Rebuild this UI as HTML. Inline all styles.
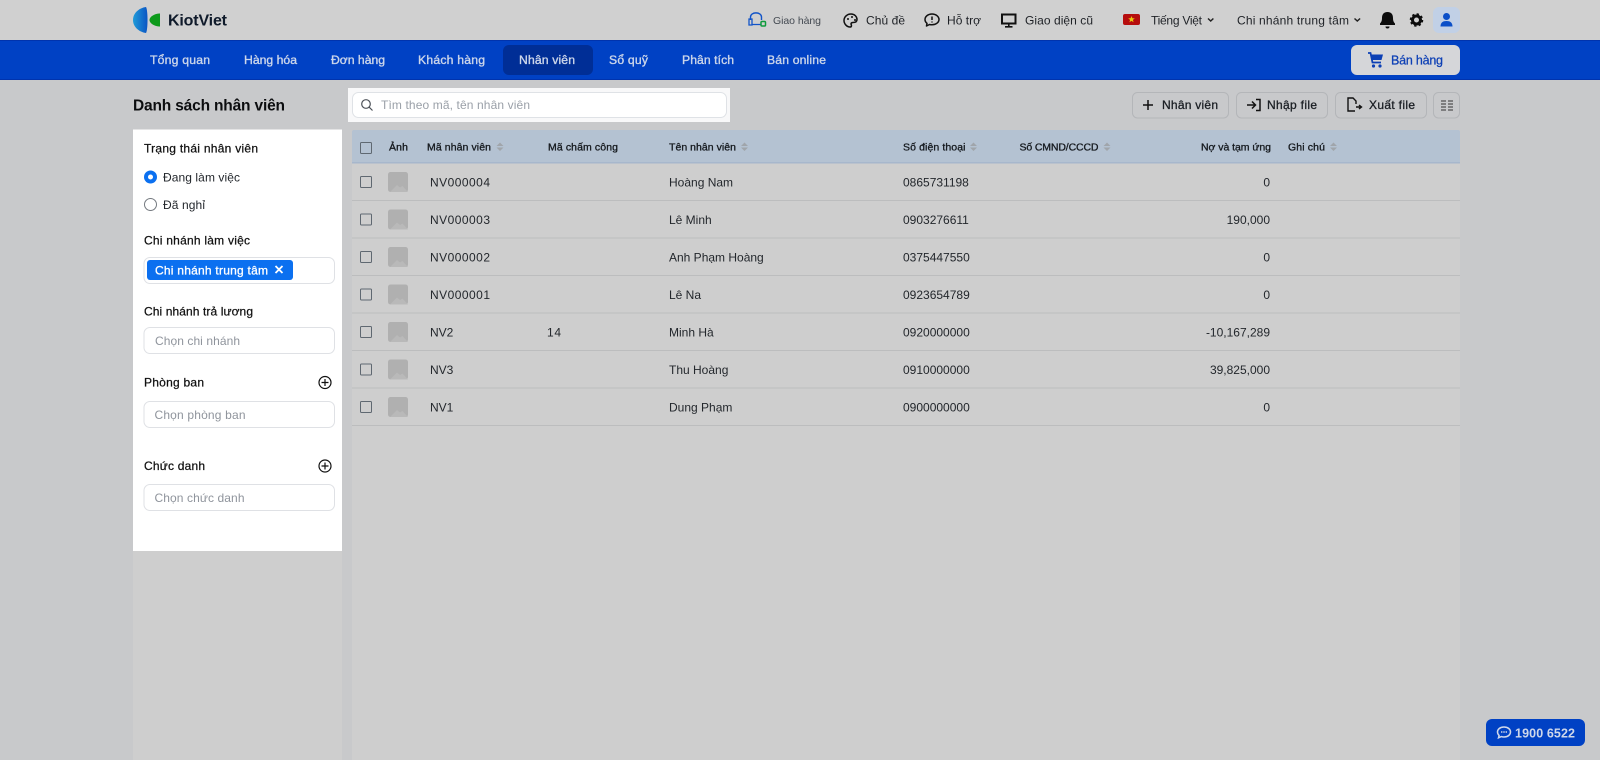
<!DOCTYPE html>
<html lang="vi"><head><meta charset="utf-8"><title>Danh sách nhân viên</title>
<style>
html,body{margin:0;padding:0;width:1600px;height:760px;overflow:hidden;background:#c8c9cb}
svg{display:block}
text{font-family:"Liberation Sans",sans-serif;font-size:12px;fill:#1c1f24}
.n text{font-size:12.2px;fill:#ccd6ea;stroke:#ccd6ea;stroke-width:.35}
.h text{font-size:10.5px;fill:#14181d;stroke:#14181d;stroke-width:.3}
.r text{font-size:12px;fill:#23272c}
.l text{font-size:12px;fill:#111;stroke:#111;stroke-width:.25}
.p text{font-size:12px;fill:#8f949c}
.t text{font-size:12px;fill:#23272c}
.b text{font-size:12px;fill:#1b1f24;stroke:#1b1f24;stroke-width:.3}
.top text{font-size:12px;fill:#1e2126}
.ic{fill:none;stroke:#111;stroke-width:1.5;stroke-linecap:round;stroke-linejoin:round}
</style></head><body>
<svg width="1600" height="760" viewBox="0 0 1600 760" xmlns="http://www.w3.org/2000/svg">
<defs>
<linearGradient id="g" x1="0" x2="1" y1="0" y2="0"><stop offset="0" stop-color="#1f9bd8"/><stop offset="1" stop-color="#0b55c4"/></linearGradient>
<g id="th"><rect width="20" height="20" rx="2.5" fill="#b0b0b0"/><path d="M2 20l7-7 3 2.500 2.500-1.500 5.500 6z" fill="#b9b9b9"/></g>
<g id="s"><path d="M0 4L3.500 .5 7 4zM0 5.500L3.500 9 7 5.500z" fill="#a0a5ab"/></g>
</defs>
<rect width="1600" height="760" fill="#c8c9cb"/>
<rect width="1600" height="40" fill="#d0d0d0"/>
<rect y="40" width="1600" height="39.500" fill="#0041c4"/>
<rect y="40" width="1600" height="1" fill="#0033ad"/>
<rect y="79" width="1600" height="1" fill="#0033ad"/>

<!-- logo -->
<path d="M146 7C139 8 133 13 133 20s6 12 13 13c2-3 2-23 0-26z" fill="url(#g)"/>
<path d="M160 13.500c-5 0-10.500 3-10.500 6.500s5.500 6.500 10.500 6.500z" fill="#0d9a1b"/>
<text x="168" y="25.500" textLength="59" style="font-size:16px;font-weight:bold;fill:#0f1a2a">KiotViet</text>

<!-- top right -->
<path d="M750.500 20v-3c0-5.500 11-5.500 11 0v3" fill="none" stroke="#1254c8" stroke-width="1.400"/><path d="M749 19h3v6h-3zM752 24.500h9" fill="none" stroke="#1254c8" stroke-width="1.300"/><rect x="761" y="21.500" width="4.500" height="4.500" rx="1" fill="#d0d0d0" stroke="#0d9a3a" stroke-width="1.500"/>
<text x="773" y="24" textLength="48" style="font-size:10.500px;fill:#444a52">Giao hàng</text>
<g class="top">
<text x="866" y="24.500" textLength="39">Chủ đề</text>
<text x="947" y="24.500" textLength="34">Hỗ trợ</text>
<text x="1025" y="24.500" textLength="68">Giao diện cũ</text>
<text x="1151" y="24.500" textLength="51">Tiếng Việt</text>
<text x="1237" y="24.500" textLength="112">Chi nhánh trung tâm</text>
</g>
<path class="ic" d="M851 14c-4 0-7 3-7 6.500s3 6.500 6 6.500c2 0 1.500-2 1-3 0-1 1-1.500 2-1.500 2.500 0 4-1 4-3 0-3-2.500-5.500-6-5.500z"/><circle cx="848" cy="19" r="1" fill="#111"/><circle cx="852" cy="17" r="1" fill="#111"/><circle cx="855" cy="20" r="1" fill="#111"/>
<path class="ic" d="M932 14c-4 0-7 2.500-7 5.500 0 1.500.7 2.800 2 3.800l-.5 2.700 3-1.500c.8.200 1.700.300 2.500.300 4 0 7-2.500 7-5.300s-3-5.500-7-5.500z"/><path d="M932 16.500v3.500M932 21.500v1" stroke="#111" stroke-width="1.500"/>
<rect x="1002" y="14.500" width="13.500" height="9" fill="none" stroke="#111" stroke-width="2"/><path d="M1008.800 24v2.500M1005 26.800h7.500" stroke="#111" stroke-width="1.600"/>
<rect x="1123" y="14" width="17" height="11" rx="2" fill="#b60d0d"/><path d="M1131.500 16l.9 2.300 2.400.100-1.900 1.500.7 2.300-2.100-1.300-2.100 1.300.7-2.300-1.900-1.500 2.400-.100z" fill="#e8c810"/>
<path d="M1208 18.500l2.700 2.500 2.700-2.500" fill="none" stroke="#222" stroke-width="1.500"/>
<path d="M1354.500 18.500l2.800 2.500 2.800-2.500" fill="none" stroke="#222" stroke-width="1.500"/>
<path d="M1387.500 12c-4 0-5.500 2.500-5.500 6 0 3.500-1.200 4.500-2 5.500v1.500h15v-1.500c-.8-1-2-2-2-5.500 0-3.500-1.500-6-5.500-6z" fill="#0c0c0c"/><path d="M1385.500 26.500a2 2 0 0 0 4 0z" fill="#0c0c0c"/>
<circle cx="1416.500" cy="20" r="4" fill="none" stroke="#0c0c0c" stroke-width="3"/><circle cx="1416.500" cy="20" r="6" fill="none" stroke="#0c0c0c" stroke-width="1.500" stroke-dasharray="2.400 2.300"/>
<rect x="1433" y="7" width="27" height="26" rx="6" fill="#c1d0e6"/><circle cx="1446.500" cy="16.500" r="3.500" fill="#0b4fc8"/><path d="M1440.500 26.500c0-4 2.500-5.500 6-5.500s6 1.500 6 5.500z" fill="#0b4fc8"/>

<!-- nav -->
<rect x="503" y="45" width="90" height="30" rx="6" fill="#002e96"/>
<g class="n">
<text x="150" y="64" textLength="60">Tổng quan</text>
<text x="244" y="64" textLength="53">Hàng hóa</text>
<text x="331" y="64" textLength="54">Đơn hàng</text>
<text x="418" y="64" textLength="67">Khách hàng</text>
<text x="519" y="64" textLength="56">Nhân viên</text>
<text x="609" y="64" textLength="39">Sổ quỹ</text>
<text x="682" y="64" textLength="52">Phân tích</text>
<text x="767" y="64" textLength="59">Bán online</text>
</g>
<rect x="1351" y="45" width="109" height="30" rx="6" fill="#d5d6d9"/>
<path d="M1368 53h2.500l2 9.500h8.500" fill="none" stroke="#0b3fb5" stroke-width="1.800"/><path d="M1371 54.500h12l-1.500 5.500h-9z" fill="#0b3fb5"/><circle cx="1373.500" cy="66" r="1.600" fill="#0b3fb5"/><circle cx="1380" cy="66" r="1.600" fill="#0b3fb5"/>
<text x="1391" y="64.500" textLength="52" style="font-size:12.500px;fill:#0e40b5;stroke:#0e40b5;stroke-width:.25">Bán hàng</text>

<!-- title + search -->
<text x="133" y="110.500" textLength="152" style="font-size:15.500px;font-weight:bold;fill:#0c0d0f">Danh sách nhân viên</text>
<rect x="348" y="88" width="382" height="34" fill="#f8f8f9"/>
<rect x="352.500" y="92.500" width="374" height="25" rx="6" fill="#fff" stroke="#dfe2e6"/>
<circle cx="366" cy="104" r="4.300" fill="none" stroke="#4c5158" stroke-width="1.200"/><path d="M369.200 107.200l3.300 3.300" stroke="#4c5158" stroke-width="1.200"/>
<text x="381" y="109" textLength="149" style="font-size:12px;fill:#9aa0a8">Tìm theo mã, tên nhân viên</text>

<!-- action buttons -->
<g fill="none" stroke="#b4b6b9">
<rect x="1132.500" y="92.500" width="96" height="25.500" rx="5"/>
<rect x="1236.500" y="92.500" width="91" height="25.500" rx="5"/>
<rect x="1335.500" y="92.500" width="91" height="25.500" rx="5"/>
<rect x="1433.500" y="92.500" width="26" height="25.500" rx="5"/>
</g>
<path d="M1148 100v10M1143 105h10" stroke="#111" stroke-width="1.500"/>
<g class="b">
<text x="1162" y="109" textLength="56">Nhân viên</text>
<text x="1267" y="109" textLength="50">Nhập file</text>
<text x="1369" y="109" textLength="46">Xuất file</text>
</g>
<path d="M1247 105h8M1252 101.500l3.500 3.500-3.500 3.500M1256 99.500h4v11h-4" fill="none" stroke="#111" stroke-width="1.500"/>
<path d="M1355 111h-7v-13h5l3 3v3M1356 107h5M1359 105l2.500 2-2.500 2" fill="none" stroke="#111" stroke-width="1.400"/>
<path d="M1441 101h5M1441 104h5M1441 107h5M1441 110h5M1448 101h5M1448 104h5M1448 107h5M1448 110h5" stroke="#333" stroke-width="1"/>

<!-- sidebar -->
<rect x="133" y="129.500" width="209" height="630.500" fill="#cecece"/>
<rect x="133" y="129.500" width="209" height="421.500" fill="#fff"/>
<g class="l">
<text x="144" y="152.500" textLength="114">Trạng thái nhân viên</text>
<text x="144" y="244.500" textLength="106">Chi nhánh làm việc</text>
<text x="144" y="315.500" textLength="109">Chi nhánh trả lương</text>
<text x="144" y="386.500" textLength="60">Phòng ban</text>
<text x="144" y="470" textLength="61">Chức danh</text>
</g>
<circle cx="150.500" cy="177" r="6.500" fill="#0b70f0"/><circle cx="150.500" cy="177" r="2.500" fill="#fff"/>
<circle cx="150.500" cy="204.500" r="6" fill="#fff" stroke="#757a80"/>
<g class="t">
<text x="163" y="181.500" textLength="77">Đang làm việc</text>
<text x="163" y="209" textLength="42">Đã nghỉ</text>
</g>
<rect x="144" y="257.500" width="190.500" height="26" rx="6" fill="#fff" stroke="#dfe1e5"/>
<rect x="147" y="260" width="146" height="20" rx="3" fill="#0b70f0"/>
<text x="155" y="274.500" textLength="113" style="font-size:12px;fill:#fff;stroke:#fff;stroke-width:.3">Chi nhánh trung tâm</text>
<path d="M275.500 266l7 7M282.500 266l-7 7" stroke="#fff" stroke-width="1.800"/>
<g fill="#fff" stroke="#dfe1e5">
<rect x="144" y="327.500" width="190.500" height="26" rx="6"/>
<rect x="144" y="401.500" width="190.500" height="26" rx="6"/>
<rect x="144" y="484.500" width="190.500" height="26" rx="6"/>
</g>
<g class="p">
<text x="155" y="345" textLength="85">Chọn chi nhánh</text>
<text x="154.500" y="419" textLength="91">Chọn phòng ban</text>
<text x="154.500" y="502" textLength="90">Chọn chức danh</text>
</g>
<g fill="none" stroke="#111" stroke-width="1.200">
<circle cx="325" cy="382.500" r="6"/><path d="M325 379v7M321.500 382.500h7"/>
<circle cx="325" cy="466" r="6"/><path d="M325 462.500v7M321.500 466h7"/>
</g>

<!-- table -->
<rect x="352" y="163" width="1108" height="597" fill="#cecece"/>
<rect x="352" y="130" width="1108" height="33" rx="2" fill="#b4c2d2"/>
<rect x="352" y="162" width="1108" height="1.500" fill="#a7b7cc"/>
<g fill="#bcbdbe">
<rect x="352" y="200" width="1108" height="1"/><rect x="352" y="237.500" width="1108" height="1"/><rect x="352" y="275" width="1108" height="1"/><rect x="352" y="312.500" width="1108" height="1"/><rect x="352" y="350" width="1108" height="1"/><rect x="352" y="387.500" width="1108" height="1"/><rect x="352" y="425" width="1108" height="1"/>
</g>
<g fill="none" stroke="#5f6871">
<rect x="360.500" y="142.500" width="11" height="11" rx="1"/>
<rect x="360.500" y="176.500" width="11" height="11" rx="1"/>
<rect x="360.500" y="214" width="11" height="11" rx="1"/>
<rect x="360.500" y="251.500" width="11" height="11" rx="1"/>
<rect x="360.500" y="289" width="11" height="11" rx="1"/>
<rect x="360.500" y="326.500" width="11" height="11" rx="1"/>
<rect x="360.500" y="364" width="11" height="11" rx="1"/>
<rect x="360.500" y="401.500" width="11" height="11" rx="1"/>
</g>
<g class="h">
<text x="389" y="150.500" textLength="19">Ảnh</text>
<text x="427" y="150.500" textLength="64">Mã nhân viên</text>
<text x="548" y="150.500" textLength="70">Mã chấm công</text>
<text x="669" y="150.500" textLength="67">Tên nhân viên</text>
<text x="903" y="150.500" textLength="62.500">Số điện thoại</text>
<text x="1019.500" y="150.500" textLength="79">Số CMND/CCCD</text>
<text x="1201" y="150.500" textLength="70">Nợ và tạm ứng</text>
<text x="1288" y="150.500" textLength="37">Ghi chú</text>
</g>
<use href="#s" x="496.500" y="142"/><use href="#s" x="741" y="142"/><use href="#s" x="970" y="142"/><use href="#s" x="1103.500" y="142"/><use href="#s" x="1330" y="142"/>
<use href="#th" x="388" y="172"/><use href="#th" x="388" y="209.500"/><use href="#th" x="388" y="247"/><use href="#th" x="388" y="284.500"/><use href="#th" x="388" y="322"/><use href="#th" x="388" y="359.500"/><use href="#th" x="388" y="397"/>
<g class="r">
<text x="430" y="186.500" textLength="60">NV000004</text><text x="669" y="186.500">Hoàng Nam</text><text x="903" y="186.500">0865731198</text><text x="1270" y="186.500" text-anchor="end">0</text>
<text x="430" y="224" textLength="60">NV000003</text><text x="669" y="224">Lê Minh</text><text x="903" y="224">0903276611</text><text x="1270" y="224" text-anchor="end">190,000</text>
<text x="430" y="261.500" textLength="60">NV000002</text><text x="669" y="261.500">Anh Phạm Hoàng</text><text x="903" y="261.500">0375447550</text><text x="1270" y="261.500" text-anchor="end">0</text>
<text x="430" y="299" textLength="60">NV000001</text><text x="669" y="299">Lê Na</text><text x="903" y="299">0923654789</text><text x="1270" y="299" text-anchor="end">0</text>
<text x="430" y="336.500">NV2</text><text x="547" y="336.500" textLength="14">14</text><text x="669" y="336.500">Minh Hà</text><text x="903" y="336.500">0920000000</text><text x="1270" y="336.500" text-anchor="end">-10,167,289</text>
<text x="430" y="374">NV3</text><text x="669" y="374">Thu Hoàng</text><text x="903" y="374">0910000000</text><text x="1270" y="374" text-anchor="end">39,825,000</text>
<text x="430" y="411.500">NV1</text><text x="669" y="411.500">Dung Phạm</text><text x="903" y="411.500">0900000000</text><text x="1270" y="411.500" text-anchor="end">0</text>
</g>

<!-- hotline -->
<rect x="1486" y="719" width="99" height="27" rx="6" fill="#0041c4"/>
<path d="M1504 727c-4 0-6.500 2.300-6.500 5 0 1.400.6 2.500 1.600 3.400l-.6 2.400 2.800-1.200c.8.300 1.700.400 2.700.400 4 0 6.500-2.300 6.500-5s-2.500-5-6.500-5z" fill="none" stroke="#cfd8ea" stroke-width="1.500"/><path d="M1501 732h6" stroke="#cfd8ea" stroke-width="1.400" stroke-dasharray="1.400 .9"/>
<text x="1515" y="737.500" textLength="60" style="font-size:12.500px;font-weight:bold;fill:#cfd8ea">1900 6522</text>
</svg>
</body></html>
